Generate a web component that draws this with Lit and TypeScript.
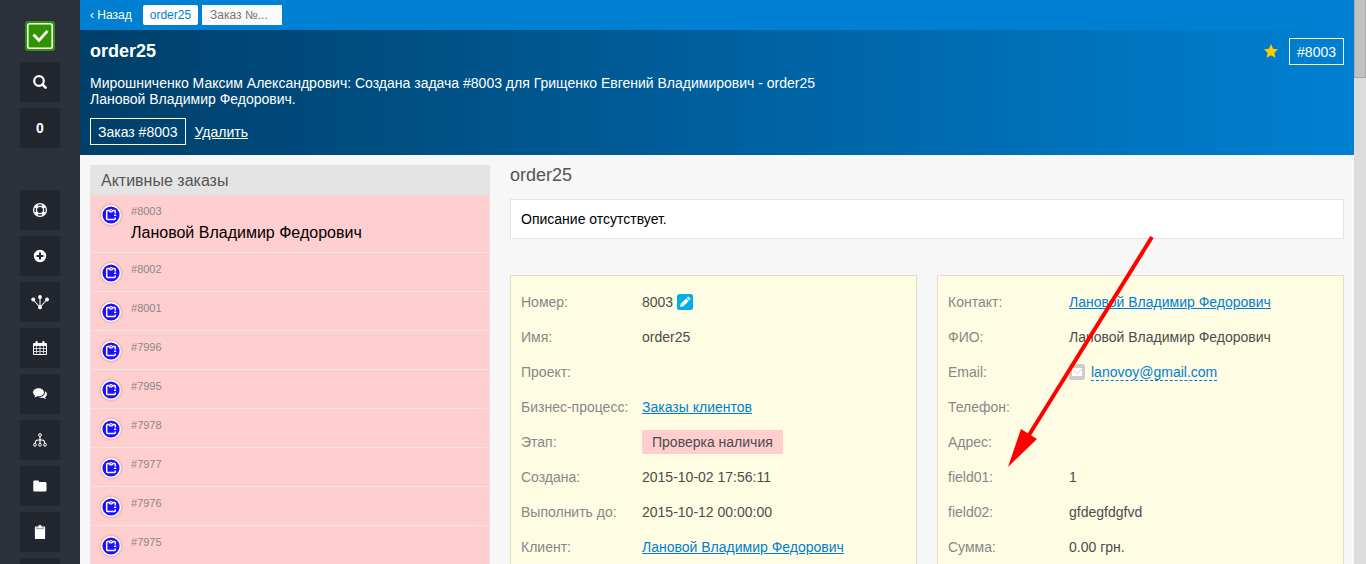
import { LitElement, html, css, svg, nothing, TemplateResult } from "lit";
import { customElement, property } from "lit/decorators.js";

const glyphs: Record<string, TemplateResult> = {
  search: svg`<circle cx="6" cy="6" r="4.800" fill="none" stroke="currentColor" stroke-width="2.200"/><path d="M9.400 9.400 12.600 12.600" stroke="currentColor" stroke-width="2.600" stroke-linecap="round"/>`,
  ring: svg`<circle cx="7" cy="7" r="6.400" fill="none" stroke="currentColor" stroke-width="1.300"/><circle cx="7" cy="7" r="3.600" fill="none" stroke="currentColor" stroke-width="1.300"/><path d="M2.400 4.900 4.900 2.400M9.100 2.400l2.500 2.500M11.600 9.100l-2.500 2.500M4.900 11.600 2.400 9.100" stroke="currentColor" stroke-width="2.600"/>`,
  plus: svg`<path fill-rule="evenodd" fill="currentColor" d="M7 .800a6.200 6.200 0 1 1 0 12.400A6.200 6.200 0 0 1 7 .800ZM6 3.500V6H3.500v2H6v2.500h2V8h2.500V6H8V3.500Z"/>`,
  nodes: svg`<path d="M1 4.500 8 12.300 15 4.500M8 2v10" fill="none" stroke="currentColor" stroke-width="1.100"/><g fill="currentColor"><circle cx="1.200" cy="4.500" r="1.900"/><circle cx="8" cy="2" r="1.900"/><circle cx="15" cy="4.500" r="1.900"/><circle cx="8" cy="12.400" r="1.900"/></g>`,
  calendar: svg`<path fill-rule="evenodd" fill="currentColor" d="M1 2h1.500V1a1 1 0 0 1 2.200 0v1h4.600V1a1 1 0 0 1 2.200 0v1H13a1 1 0 0 1 1 1v10a1 1 0 0 1-1 1H1a1 1 0 0 1-1-1V3a1 1 0 0 1 1-1ZM1 5v2h2.300V5Zm3 0v2h2.600V5Zm3.400 0v2H10V5Zm3.300 0v2H13V5ZM1 7.800v2.100h2.300V7.800Zm3 0v2.100h2.600V7.800Zm3.400 0v2.100H10V7.800Zm3.300 0v2.100H13V7.800ZM1 10.700V13h2.300v-2.300Zm3 0V13h2.600v-2.300Zm3.400 0V13H10v-2.300Zm3.300 0V13H13v-2.300Z"/>`,
  chat: svg`<path fill="currentColor" d="M5.500 1.200C8.600 1.200 11 3 11 5.300S8.600 9.300 5.500 9.300c-.5 0-1 0-1.400-.1-.8.6-1.800 1-2.900 1.100.5-.5.8-1.100.9-1.800C.8 7.700 0 6.600 0 5.300 0 3 2.400 1.200 5.500 1.200Z"/><path fill="currentColor" d="M11.900 4.200C13.200 4.900 14 6 14 7.200c0 1.100-.7 2.200-1.900 2.900.1.700.4 1.300.9 1.800-1.100-.1-2.100-.5-2.900-1.100-1.500.3-3.200 0-4.400-.7 3.600 0 6.800-2.400 6.200-5.900Z"/>`,
  tree: svg`<g fill="none" stroke="currentColor"><circle cx="7" cy="2" r="1.400"/><circle cx="2" cy="11.800" r="1.400"/><circle cx="7" cy="11.800" r="1.400"/><circle cx="12" cy="11.800" r="1.400"/><path d="M7 3.400v7M2.300 10.300C2.300 7.500 3.200 7 5 7h4c1.800 0 2.700.5 2.700 3.300" stroke-width="1.200"/></g>`,
  folder: svg`<path fill="currentColor" d="M1.500 1.500h3.300c.7 0 1.200.5 1.200 1.200v.4h6.200c.8 0 1.300.6 1.300 1.300v6.800c0 .7-.5 1.300-1.300 1.300H1.500c-.7 0-1.200-.6-1.200-1.300V2.700c0-.7.5-1.200 1.200-1.200Z"/>`,
  clipboard: svg`<path fill="currentColor" d="M2.500 1.500h9c.3 0 .6.300.6.600v11.300c0 .3-.3.600-.6.600h-9c-.3 0-.6-.3-.6-.6V2.100c0-.3.300-.6.600-.6Z"/><path fill="currentColor" stroke="#777" stroke-width=".8" d="M3.600 3.700c0-1.500.7-2.200 2.100-2.400a1.300 1.300 0 0 1 2.600 0c1.400.2 2.100.9 2.100 2.400Z"/><circle cx="7" cy="1.300" r="1.400" fill="currentColor"/>`,
  star: svg`<path fill="currentColor" d="m7 0 2.100 4.700 4.900.6-3.600 3.400.9 5.100L7 11.300l-4.300 2.500.9-5.100L0 5.300l4.900-.6Z"/>`,
  order: svg`<circle cx="10" cy="10" r="9.300" fill="#1f0fff" stroke="#fff" stroke-width="1.400"/><path d="M14.300 8.400V6.400a.8.800 0 0 0-.8-.8H6.500a.8.800 0 0 0-.8.8v7.200a.8.800 0 0 0 .8.800h7a.8.800 0 0 0 .8-.8v-1.200" fill="none" stroke="#fff" stroke-width="1.500"/><path d="M7.200 5.400h1.500a1.300 1.300 0 0 1 2.600 0h1.500l-1.600 2.200H8.800Z" fill="#fff"/><path d="M13 10.300h2.200" stroke="#fff" stroke-width="1.400"/><rect x="9.300" y="5.200" width="1.400" height="1" fill="#1f0fff"/>`,
  pencil: svg`<rect width="16" height="16" rx="2.500" fill="#00aeef"/><path fill="#fff" d="m3.200 12.900.7-3.300 5.200-5.200 2.600 2.600-5.200 5.200Zm6.500-9.100.8-.8c.4-.4.9-.4 1.300 0l1.300 1.300c.4.400.4.900 0 1.300l-.8.800Z"/>`,
  mail: svg`<rect width="16" height="16" rx="2.500" fill="#ccc"/><path fill="#fff" d="M3 4h10v.9L8 9 3 4.900Z"/><path fill="#fff" d="M3 6l5 4 5-4v6H3Z"/>`,
  logo: svg`<rect width="30" height="30" rx="3" fill="#2f9400"/><rect x="2.800" y="2.800" width="24.400" height="24.400" rx="2" fill="none" stroke="#fff" stroke-width="1.600"/><path d="m8.500 13.500 5.500 6 8.500-9.700" fill="none" stroke="#fff" stroke-width="2.700"/>`,
};

@customElement("ui-icon")
class UiIcon extends LitElement {
  @property() name = "";
  @property({ type: Number }) size = 14;
  @property({ type: Number }) wide = 0;
  static styles = css`
    :host { display: inline-flex; flex: none; }
    svg { display: block; overflow: visible; }
  `;
  render() {
    const w = this.wide || this.size;
    return html`<svg width=${w} height=${this.size} viewBox="0 0 ${w} ${this.size}" aria-hidden="true">${glyphs[this.name]}</svg>`;
  }
}

@customElement("side-nav")
class SideNav extends LitElement {
  static styles = css`
    :host { display: flex; flex-direction: column; align-items: center; gap: 6px; width: 80px; flex: none; background: #2c303b; padding-top: 21px; box-sizing: border-box; overflow: hidden; }
    .logo { display: flex; margin-bottom: 5px; }
    button { width: 40px; height: 40px; flex: none; display: flex; align-items: center; justify-content: center; border: 0; padding: 0; background: #22262f; color: #fff; font: bold 14px "Liberation Sans", Arial, sans-serif; }
    .group { display: flex; flex-direction: column; gap: 6px; }
    .tools { margin-top: 36px; }
  `;
  render() {
    const tools: [string, string][] = [["ring", "Помощь"], ["plus", "Добавить"], ["nodes", "Процессы"], ["calendar", "Календарь"], ["chat", "Сообщения"], ["tree", "Структура"], ["folder", "Файлы"], ["clipboard", "Заказы"], ["", "Ещё"]];
    return html`
      <a class="logo" href="#" aria-label="Главная"><ui-icon name="logo" size="30"></ui-icon></a>
      <div class="group">
        <button aria-label="Поиск"><ui-icon name="search"></ui-icon></button>
        <button>0</button>
      </div>
      <div class="group tools">
        ${tools.map(([n, l]) => html`<button aria-label=${l}>${n ? html`<ui-icon name=${n} wide=${n === "nodes" ? 16 : 14}></ui-icon>` : nothing}</button>`)}
      </div>`;
  }
}

@customElement("order-list")
class OrderList extends LitElement {
  static styles = css`
    :host { display: block; width: 400px; flex: none; }
    h2 { margin: 0; padding: 1px 11px 0; font-size: 16px; line-height: 29px; font-weight: normal; color: #555; background: #e4e4e4; }
    ul { margin: 0; padding: 0; list-style: none; border: solid #e4e4e4; border-width: 0 1px; }
    li { display: flex; gap: 10px; padding: 10px 10px 5px; background: #ffcece; border-bottom: 1px solid #e8e8e8; }
    ui-icon { height: 20px; border-radius: 50%; box-shadow: 0 0 3px rgba(0, 0, 0, 0.3); }
    .text { min-height: 23px; }
    .num { font-size: 11px; line-height: 13px; color: #888; }
    .name { font-size: 16px; line-height: 29px; color: #000; }
  `;
  render() {
    const orders = [8003, 8002, 8001, 7996, 7995, 7978, 7977, 7976, 7975];
    return html`<h2>Активные заказы</h2>
      <ul>${orders.map((n, i) => html`<li><ui-icon name="order" size="20"></ui-icon><div class="text"><div class="num">#${n}</div>${i === 0 ? html`<div class="name">Лановой Владимир Федорович</div>` : nothing}</div></li>`)}</ul>`;
  }
}

@customElement("app-root")
class AppRoot extends LitElement {
  static styles = css`
    :host { display: flex; height: 100vh; overflow: hidden; background: #f7f7f7; font: 14px/16px "Liberation Sans", Arial, sans-serif; color: #4c4c4c; }
    main { flex: 1; min-width: 0; }
    a { color: #007fd2; }
    .bar { display: flex; align-items: center; height: 30px; padding: 0 10px; background: #0080d2; font-size: 12px; }
    .back { color: #fff; text-decoration: none; margin-right: 11px; }
    .tab { background: #fff; text-decoration: none; line-height: 20px; padding: 0 7px; border-radius: 2px; margin-right: 4px; }
    .bar input { width: 80px; height: 20px; box-sizing: border-box; border: 0; padding: 0 8px; background: #fafafa; font: 12px "Liberation Sans", Arial, sans-serif; }
    .bar input::placeholder { color: #757575; }
    .hero { background: linear-gradient(to right, #003f69, #0080d2); color: #fff; padding: 8px 10px 10px; }
    .top { display: flex; align-items: center; }
    h1 { margin: 0; flex: 1; font-size: 18px; line-height: 24px; padding-bottom: 2px; }
    .top ui-icon { color: #fc0; margin-right: 11px; padding-bottom: 2px; }
    .hero p { margin: 10px 0 11px; }
    .acts { display: flex; align-items: center; gap: 9px; }
    .box { border: 1px solid #fff; color: #fff; background: none; padding: 1px 7px 0; font: 14px/24px "Liberation Sans", Arial, sans-serif; }
    .acts a { color: #fff; }
    .cols { display: flex; gap: 20px; padding: 10px; }
    .detail { flex: 1; min-width: 0; }
    h2 { margin: 0 0 14px; font-size: 18px; line-height: 20px; font-weight: normal; color: #555; }
    .desc { background: #fff; border: 1px solid #e4e4e4; padding: 11px 10px; color: #000; margin-bottom: 36px; }
    .cards { display: grid; grid-template-columns: 1fr 1fr; gap: 20px; }
    .card { position: relative; background: #fefce2; border: 1px solid #e0dfc8; padding: 8px 10px; }
    dl { margin: 0; }
    .row { display: flex; align-items: center; height: 35px; }
    dt { width: 121px; flex: none; color: #888; }
    dd { margin: 0; display: flex; align-items: center; gap: 4px; white-space: nowrap; }
    .stage { background: #ffcece; padding: 4px 10px; }
    .mail { text-decoration: none; border-bottom: 1px dashed #007fd2; margin-left: 2px; padding-top: 1px; }
    .arrow { position: absolute; left: 70px; top: -40px; pointer-events: none; }
    .scroll { width: 12px; flex: none; background: #dcdcdc; }
    .thumb { height: 78px; box-sizing: border-box; background: #c1c1c1; border: 1px solid #a8a8a8; border-top: 0; }
  `;
  private row(label: string, value: unknown = nothing) {
    return html`<div class="row"><dt>${label}</dt><dd>${value}</dd></div>`;
  }
  render() {
    const client = "Лановой Владимир Федорович";
    return html`
      <side-nav></side-nav>
      <main>
        <nav class="bar">
          <a class="back" href="#">‹ Назад</a>
          <a class="tab" href="#">order25</a>
          <input aria-label="Номер заказа" placeholder="Заказ №..." />
        </nav>
        <header class="hero">
          <div class="top"><h1>order25</h1><ui-icon name="star"></ui-icon><button class="box">#8003</button></div>
          <p>Мирошниченко Максим Александрович: Создана задача #8003 для Грищенко Евгений Владимирович - order25<br />Лановой Владимир Федорович.</p>
          <div class="acts"><button class="box">Заказ #8003</button><a href="#">Удалить</a></div>
        </header>
        <div class="cols">
          <order-list></order-list>
          <section class="detail">
            <h2>order25</h2>
            <div class="desc">Описание отсутствует.</div>
            <div class="cards">
              <div class="card"><dl>
                ${this.row("Номер:", html`8003 <ui-icon name="pencil" size="16"></ui-icon>`)}
                ${this.row("Имя:", "order25")}
                ${this.row("Проект:")}
                ${this.row("Бизнес-процесс:", html`<a href="#">Заказы клиентов</a>`)}
                ${this.row("Этап:", html`<span class="stage">Проверка наличия</span>`)}
                ${this.row("Создана:", "2015-10-02 17:56:11")}
                ${this.row("Выполнить до:", "2015-10-12 00:00:00")}
                ${this.row("Клиент:", html`<a href="#">${client}</a>`)}
              </dl></div>
              <div class="card"><dl>
                ${this.row("Контакт:", html`<a href="#">${client}</a>`)}
                ${this.row("ФИО:", client)}
                ${this.row("Email:", html`<ui-icon name="mail" size="16"></ui-icon><a class="mail" href="#">lanovoy@gmail.com</a>`)}
                ${this.row("Телефон:")}
                ${this.row("Адрес:")}
                ${this.row("field01:", "1")}
                ${this.row("field02:", "gfdegfdgfvd")}
                ${this.row("Сумма:", "0.00 грн.")}
              </dl>
              <svg class="arrow" width="150" height="234" viewBox="0 0 150 234" aria-hidden="true"><path d="M144 1 21 199" stroke="#f00" stroke-width="4"/><path d="M0 231 13 193 29 203Z" fill="#f00"/></svg>
              </div>
            </div>
          </section>
        </div>
      </main>
      <div class="scroll"><div class="thumb"></div></div>`;
  }
}
